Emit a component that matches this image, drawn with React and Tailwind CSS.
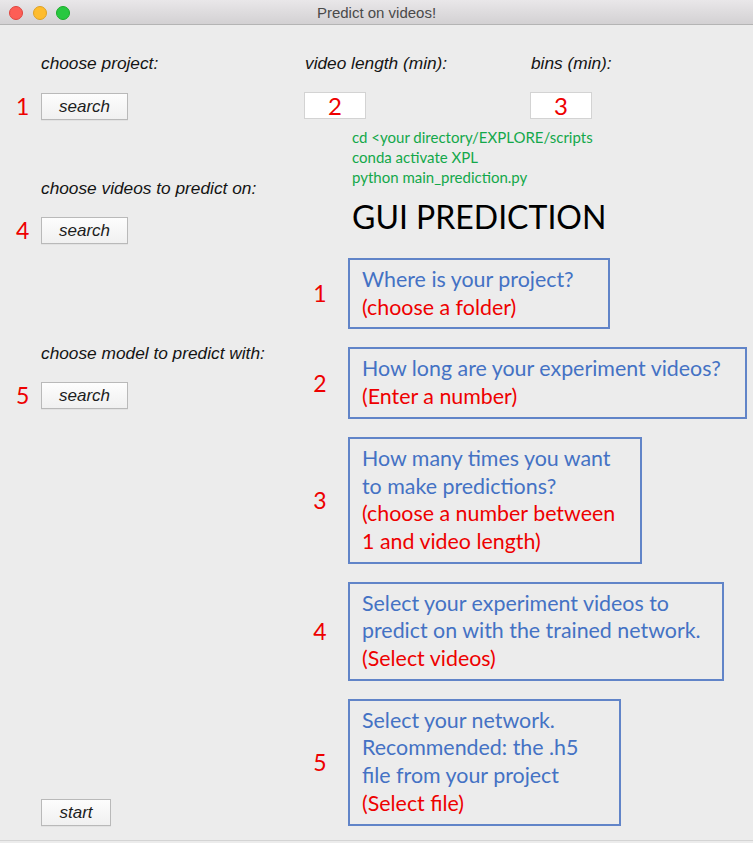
import React from "react";

const LATO = { fontFamily: "Lato, 'Open Sans', sans-serif" };

function MacButton({ children, w }) {
  return (
    <div
      className={`${w} h-[27px] flex items-center justify-center border border-[#b9b9b9] bg-gradient-to-b from-[#fdfdfd] to-[#f0f0f0] text-[17px] italic text-[#1d1d1d] leading-none shadow-[0_1px_0_rgba(0,0,0,0.04)]`}
      style={{ fontFamily: "'Liberation Sans', Arial, sans-serif" }}
    >
      {children}
    </div>
  );
}

function Label({ children, className = "" }) {
  return (
    <div
      className={`h-[20px] leading-[20px] text-[17.3px] italic text-[#141414] whitespace-nowrap ${className}`}
      style={{ fontFamily: "'Liberation Sans', Arial, sans-serif" }}
    >
      {children}
    </div>
  );
}

function LeftRow({ n, children }) {
  return (
    <div className="flex items-center">
      <span className="w-[41px] pl-[16px] text-[23px] leading-none text-[#ee0000]" style={LATO}>
        {n}
      </span>
      {children}
    </div>
  );
}

function Step({ n, w, blue, red }) {
  return (
    <div className="flex items-center">
      <span className="w-[40px] text-center text-[23px] leading-none text-[#ee0000]" style={LATO}>
        {n}
      </span>
      <div
        className={`ml-[8px] ${w} border-2 border-[#6184c8] px-[12px] py-[6px] text-[21.4px] leading-[27.7px]`}
        style={LATO}
      >
        {blue.map((t, i) => (
          <div key={"b" + i} className="text-[#4472c4] whitespace-nowrap">
            {t}
          </div>
        ))}
        {red.map((t, i) => (
          <div key={"r" + i} className="text-[#ee0000] whitespace-nowrap">
            {t}
          </div>
        ))}
      </div>
    </div>
  );
}

export default function App() {
  return (
    <div className="w-[753px] h-[843px] bg-[#ececec] flex flex-col overflow-hidden">
      {/* title bar */}
      <div className="relative h-[25px] shrink-0 bg-gradient-to-b from-[#e9e7e9] to-[#d3d1d3] border-b border-[#b4b4b4] flex items-center justify-center">
        <div className="absolute left-[9px] top-[6px] flex gap-[9.5px]">
          <span className="w-[14px] h-[14px] rounded-full bg-[#fd5e56] border border-[#e0443e]" />
          <span className="w-[14px] h-[14px] rounded-full bg-[#febc2e] border border-[#dea123]" />
          <span className="w-[14px] h-[14px] rounded-full bg-[#28c840] border border-[#1aab29]" />
        </div>
        <span
          className="text-[15px] text-[#4a4a4a] leading-none"
          style={{ fontFamily: "'Liberation Sans', Arial, sans-serif" }}
        >
          Predict on videos!
        </span>
      </div>

      {/* body */}
      <div className="flex flex-1 border-b border-[#d4d4d4]">
        {/* left column */}
        <div className="w-[300px] flex flex-col pt-[28px] pb-[14px]">
          <Label className="pl-[41px]">choose project:</Label>
          <div className="mt-[20px]">
            <LeftRow n="1">
              <MacButton w="w-[87px]">search</MacButton>
            </LeftRow>
          </div>
          <Label className="pl-[41px] mt-[58px]">choose videos to predict on:</Label>
          <div className="mt-[19px]">
            <LeftRow n="4">
              <MacButton w="w-[87px]">search</MacButton>
            </LeftRow>
          </div>
          <Label className="pl-[41px] mt-[99px]">choose model to predict with:</Label>
          <div className="mt-[19px]">
            <LeftRow n="5">
              <MacButton w="w-[87px]">search</MacButton>
            </LeftRow>
          </div>
          <div className="mt-auto pl-[41px]">
            <MacButton w="w-[70px]">start</MacButton>
          </div>
        </div>

        {/* right column */}
        <div className="flex-1 flex flex-col pt-[28px]">
          <div className="flex">
            <div className="ml-[4px] w-[226px]">
              <Label className="pl-[1px]">video length (min):</Label>
              <div
                className="mt-[19px] w-[62px] h-[27px] bg-white border border-[#d3d3d3] flex items-center justify-center text-[24px] leading-none text-[#ee0000]"
                style={LATO}
              >
                2
              </div>
            </div>
            <div>
              <Label className="pl-[1px]">bins (min):</Label>
              <div
                className="mt-[19px] w-[62px] h-[27px] bg-white border border-[#d3d3d3] flex items-center justify-center text-[24px] leading-none text-[#ee0000]"
                style={LATO}
              >
                3
              </div>
            </div>
          </div>

          <div className="mt-[8px] pl-[52px] text-[15px] leading-[20px] text-[#13a84a]" style={LATO}>
            <div>cd &lt;your directory/EXPLORE/scripts</div>
            <div>conda activate XPL</div>
            <div>python main_prediction.py</div>
          </div>

          <div className="mt-[10px] pl-[52px] text-[32px] leading-[40px] text-black" style={LATO}>
            GUI PREDICTION
          </div>

          <div className="mt-[21px] flex flex-col gap-[18px]">
            <Step n="1" w="w-[262px]" blue={["Where is your project?"]} red={["(choose a folder)"]} />
            <Step n="2" w="w-[399px]" blue={["How long are your experiment videos?"]} red={["(Enter a number)"]} />
            <Step
              n="3"
              w="w-[294px]"
              blue={["How many times you want", "to make predictions?"]}
              red={["(choose a number between", "1 and video length)"]}
            />
            <Step
              n="4"
              w="w-[376px]"
              blue={["Select your experiment videos to", "predict on with the trained network."]}
              red={["(Select videos)"]}
            />
            <Step
              n="5"
              w="w-[273px]"
              blue={["Select your network.", "Recommended: the .h5", "file from your project"]}
              red={["(Select file)"]}
            />
          </div>
        </div>
      </div>
      <div className="h-[2px] shrink-0 bg-[#ececec]" />
    </div>
  );
}
